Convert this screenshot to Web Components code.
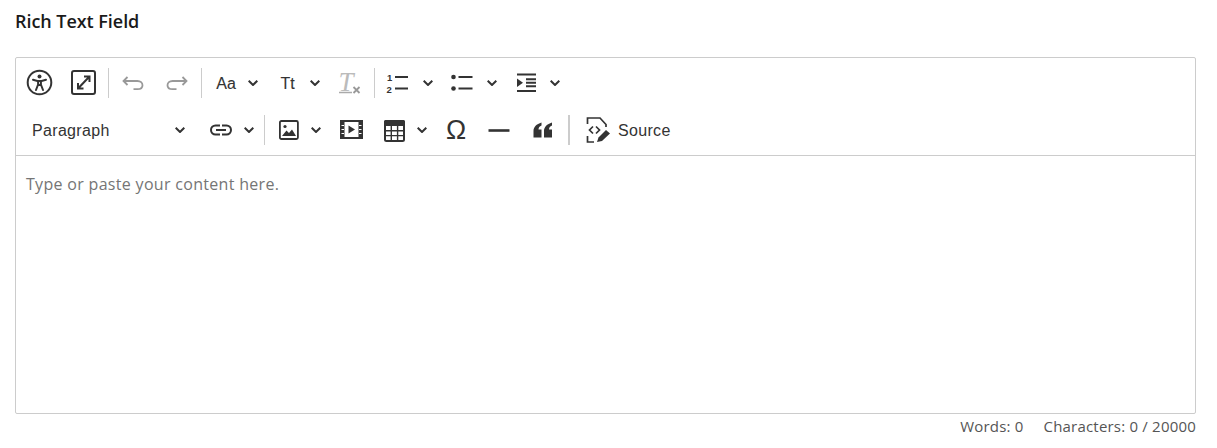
<!DOCTYPE html>
<html lang="en">
<head>
<meta charset="utf-8">
<title>Rich Text Field</title>
<style>
    html, body { margin: 0; background: #fff; }
    body { padding: 0 21px 0 15px; }
    .tb-text { margin-top: 2px; letter-spacing: .33px; }
    .omega { font-size: 27px; line-height: 30px; margin-left: 2px; }
</style>
</head>
<body>
<rt-field label="Rich Text Field" placeholder="Type or paste your content here." words="0" chars="0 / 20000">
    <tb-row>
        <tb-btn><rt-icon name="a11y"></rt-icon></tb-btn>
        <tb-btn><rt-icon name="fullscreen"></rt-icon></tb-btn>
        <tb-sep style="--before:3px"></tb-sep>
        <tb-btn><rt-icon name="undo"></rt-icon></tb-btn>
        <tb-btn><rt-icon name="redo"></rt-icon></tb-btn>
        <tb-sep></tb-sep>
        <tb-drop><rt-icon name="size"></rt-icon></tb-drop>
        <tb-drop><rt-icon name="family"></rt-icon></tb-drop>
        <tb-btn><rt-icon name="clear"></rt-icon></tb-btn>
        <tb-sep></tb-sep>
        <tb-drop style="--left:8px;--gap:12px;--right:6px"><rt-icon name="numbered"></rt-icon></tb-drop>
        <tb-drop style="--gap:13px"><rt-icon name="bullets"></rt-icon></tb-drop>
        <tb-drop style="--gap:10px"><rt-icon name="indent"></rt-icon></tb-drop>
    </tb-row>
    <tb-row>
        <tb-drop style="--left:15px;--right:13px;--gap:0px;width:181px"><span class="tb-text">Paragraph</span></tb-drop>
        <tb-drop style="--left:10px;--gap:10px"><rt-icon name="link"></rt-icon></tb-drop>
        <tb-sep></tb-sep>
        <tb-drop><rt-icon name="image"></rt-icon></tb-drop>
        <tb-btn><rt-icon name="media"></rt-icon></tb-btn>
        <tb-drop style="--left:8px;--gap:10px;--right:6px"><rt-icon name="table"></rt-icon></tb-drop>
        <tb-btn><span class="omega">Ω</span></tb-btn>
        <tb-btn><rt-icon name="rule"></rt-icon></tb-btn>
        <tb-btn><rt-icon name="quote"></rt-icon></tb-btn>
        <tb-sep style="--before:3px;--sep-width:2px;--after:1px"></tb-sep>
        <tb-btn style="--pad:14px;--gap:7px">
            <rt-icon name="source"></rt-icon><span class="tb-text">Source</span>
        </tb-btn>
    </tb-row>
</rt-field>

<script>
// All icons are on a 26x26 grid so the coordinates read as pixels
const ICONS = {
    a11y: `<circle cx="13.5" cy="12.5" r="11.8" fill="none" stroke="#333" stroke-width="2"/>
        <circle cx="13.5" cy="6.6" r="2" fill="#333"/>
        <path d="M7 9.8 L11.5 11 H15.5 L20 9.8 M12.1 11 V14.5 L10 20 M14.9 11 V14.5 L17 20 M12.1 15 H14.9" fill="none" stroke="#333" stroke-width="2" stroke-linecap="round" stroke-linejoin="round"/>`,
    fullscreen: `<rect x="2" y="1" width="23" height="23" rx="2" fill="none" stroke="#333" stroke-width="2"/>
        <path d="M9 17.5 L18.5 7.5 M14 6.5 H19.5 V12 M8 13 V18.5 H13.5" fill="none" stroke="#333" stroke-width="2"/>`,
    undo: `<path d="M7.5 7 L3.5 11 L7.5 15 M3.5 11 H17.5 C20.5 11 22.5 13 22.5 15.2 C22.5 17.5 20.5 19.2 17.5 19.2 H13.5" fill="none" stroke="#999" stroke-width="1.8"/>`,
    redo: `<path d="M18.5 7 L22.5 11 L18.5 15 M22.5 11 H8.5 C5.5 11 3.5 13 3.5 15.2 C3.5 17.5 5.5 19.2 8.5 19.2 H12.5" fill="none" stroke="#999" stroke-width="1.8"/>`,
    size: `<text x="13" y="18.5" text-anchor="middle" font-family="Liberation Sans" font-size="16" fill="#333" stroke="#333" stroke-width=".12">Aa</text>`,
    family: `<text x="12.5" y="18.5" text-anchor="middle" font-family="Liberation Sans" font-size="16" fill="#333" stroke="#333" stroke-width=".12">Tt</text>`,
    clear: `<text x="1.5" y="21" font-family="Liberation Serif" font-style="italic" font-size="27" fill="#bbb">T</text>
        <path d="M2 22.5 H15" stroke="#aaa" stroke-width="1.5"/>
        <path d="M16.5 17 L22.5 23 M22.5 17 L16.5 23" stroke="#999" stroke-width="1.8"/>`,
    numbered: `<text x="2" y="10.5" font-family="Liberation Sans" font-weight="700" font-size="9.5" fill="#333">1</text>
        <text x="1.5" y="22.5" font-family="Liberation Sans" font-weight="700" font-size="9.5" fill="#333">2</text>
        <path d="M10 7 H23 M10 18.5 H23" stroke="#333" stroke-width="2"/>`,
    bullets: `<circle cx="5.5" cy="7" r="2.3" fill="#333"/><circle cx="5.5" cy="18.5" r="2.3" fill="#333"/>
        <path d="M10.5 7 H24.5 M10.5 18.5 H24.5" stroke="#333" stroke-width="2"/>`,
    indent: `<path d="M3 4.5 H22 M3 21 H22" stroke="#333" stroke-width="2"/>
        <path d="M12 9.3 H22 M12 12.8 H22 M12 16.3 H22" stroke="#333" stroke-width="2"/>
        <path d="M3 8.5 L9 12.8 L3 17 Z" fill="#333"/>`,
    link: `<path d="M12 8.5 H7.5 A4.5 4.5 0 0 0 7.5 17.5 H12 M14 8.5 H18.5 A4.5 4.5 0 0 1 18.5 17.5 H14 M8 13 H18" fill="none" stroke="#333" stroke-width="2"/>`,
    image: `<rect x="3.9" y="4" width="18" height="18" rx="1.5" fill="none" stroke="#333" stroke-width="1.8"/>
        <circle cx="9" cy="9.5" r="1.6" fill="#333"/>
        <path d="M6 19 L10.5 13.5 L13 16 L16 12.5 L20 19 Z" fill="#333"/>`,
    media: `<rect x="3" y="4" width="21" height="17" fill="none" stroke="#333" stroke-width="2"/>
        <rect x="3" y="4" width="3.5" height="17" fill="#333"/><rect x="20.5" y="4" width="3.5" height="17" fill="#333"/>
        <path d="M3.5 8.5 H6 M3.5 12.5 H6 M3.5 16.5 H6 M21 8.5 H23.5 M21 12.5 H23.5 M21 16.5 H23.5" stroke="#fff" stroke-width="1"/>
        <path d="M10.5 8.5 L17 12.5 L10.5 16.5 Z" fill="#333"/>`,
    table: `<rect x="4" y="4" width="19" height="20" rx="1.5" fill="none" stroke="#333" stroke-width="2"/>
        <rect x="3" y="3" width="21" height="6" rx="1.5" fill="#333"/>
        <path d="M10.3 9 V23 M16.6 9 V23 M4 13.7 H23 M4 18.6 H23" stroke="#333" stroke-width="1.4"/>`,
    rule: `<path d="M2.5 13.5 H23.5" stroke="#333" stroke-width="2.6"/>`,
    quote: `<path d="M3.5 20.5 V14 C3.5 10 6.5 7 11.5 5.5 V8.5 C9.5 9.2 8.5 10.5 8.5 12.5 H11.5 V20.5 Z M14 20.5 V14 C14 10 17 7 22 5.5 V8.5 C20 9.2 19 10.5 19 12.5 H22 V20.5 Z" fill="#333"/>`,
    source: `<path d="M2.5 7 V1 H15 L21 7.5 V10 M2.5 19 V25 H9" fill="none" stroke="#333" stroke-width="1.7"/>
        <path d="M8 9.5 L4.5 13 L8 16.5 M11 9.5 L14.5 13 L11 16.5" fill="none" stroke="#333" stroke-width="1.7"/>
        <path d="M12 25 L13.5 20.5 L21 13 L25 16.5 L17 24 Z" fill="#333"/>`
};

class RtIcon extends HTMLElement {
    connectedCallback() {
        const name = this.getAttribute('name');
        this.attachShadow({ mode: 'open' });
        this.shadowRoot.innerHTML = `
            <style>
                :host { display: block; width: 26px; height: 26px; flex: none; }
                svg { display: block; overflow: visible; }
            </style>
            <svg width="26" height="26" viewBox="0 0 26 26" aria-hidden="true">${ICONS[name] || ''}</svg>
        `;
    }
}

class TbButton extends HTMLElement {
    constructor() {
        super();
        this.attachShadow({ mode: 'open' });
        this.shadowRoot.innerHTML = `
            <style>
                :host {
                    display: flex;
                    align-items: center;
                    justify-content: center;
                    flex: none;
                    min-width: 44px;
                    height: 44px;
                    box-sizing: border-box;
                    padding: 0 0 0 var(--pad, 0);
                    gap: var(--gap, 0);
                    font: 16px "Liberation Sans", Arial, sans-serif;
                    color: #333;
                }
            </style>
            <slot></slot>
        `;
    }
}

class TbDropdown extends HTMLElement {
    constructor() {
        super();
        this.attachShadow({ mode: 'open' });
        this.shadowRoot.innerHTML = `
            <style>
                :host {
                    display: flex;
                    align-items: center;
                    flex: none;
                    height: 44px;
                    box-sizing: border-box;
                    padding: 0 var(--right, 8px) 0 var(--left, 9px);
                    font: 16px "Liberation Sans", Arial, sans-serif;
                    color: #333;
                }
                .arrow { display: block; margin-left: var(--gap, 9px); flex: none; }
                .label { flex: 1; display: flex; align-items: center; }
            </style>
            <div class="label"><slot></slot></div>
            <svg class="arrow" width="10" height="6" viewBox="0 0 10 6" aria-hidden="true">
                <path d="M.7 .7 L5 5 L9.3 .7" fill="none" stroke="#333" stroke-width="2"/>
            </svg>
        `;
    }
}

class TbSeparator extends HTMLElement {
    constructor() {
        super();
        this.attachShadow({ mode: 'open' });
        this.shadowRoot.innerHTML = `
            <style>
                :host {
                    display: block;
                    flex: none;
                    width: var(--sep-width, 1px);
                    height: 30px;
                    margin: 0 var(--after, 2px) 0 var(--before, 2px);
                    background: #ccc;
                }
            </style>
        `;
    }
}

class TbRow extends HTMLElement {
    constructor() {
        super();
        this.attachShadow({ mode: 'open' });
        this.shadowRoot.innerHTML = `
            <style>
                :host { display: flex; align-items: center; padding-left: 1px; }
            </style>
            <slot></slot>
        `;
    }
}

class RtField extends HTMLElement {
    constructor() {
        super();
        this.attachShadow({ mode: 'open' });
    }

    connectedCallback() {
        const attr = (name) => this.getAttribute(name) || '';
        this.shadowRoot.innerHTML = `
            <style>
                :host {
                    display: block;
                    font-family: "Open Sans", Arial, sans-serif;
                }
                .label {
                    padding-top: 10px;
                    margin-bottom: 25px;
                    font-size: 18px;
                    font-weight: 600;
                    line-height: 22px;
                    letter-spacing: -.05px;
                    color: #1a1a1a;
                }
                .box {
                    height: 357px;
                    box-sizing: border-box;
                    display: flex;
                    flex-direction: column;
                    border: 1px solid #ccc;
                    border-radius: 2px;
                }
                .toolbar {
                    display: flex;
                    flex-direction: column;
                    gap: 3px;
                    padding: 3px 0;
                    border-bottom: 1px solid #ccc;
                }
                .editor {
                    flex: 1;
                    padding: 17px 10px;
                    font-size: 16px;
                    letter-spacing: .31px;
                    line-height: 22px;
                    color: #757575;
                }
                .footer {
                    display: flex;
                    justify-content: flex-end;
                    gap: 20px;
                    margin-top: 3px;
                    font-size: 15px;
                    letter-spacing: .2px;
                    line-height: 19px;
                    color: #555;
                }
            </style>
            <div class="label">${attr('label')}</div>
            <div class="box">
                <div class="toolbar"><slot></slot></div>
                <div class="editor">${attr('placeholder')}</div>
            </div>
            <div class="footer">
                <span>Words: ${attr('words')}</span>
                <span>Characters: ${attr('chars')}</span>
            </div>
        `;
    }
}

customElements.define('rt-icon', RtIcon);
customElements.define('tb-btn', TbButton);
customElements.define('tb-drop', TbDropdown);
customElements.define('tb-sep', TbSeparator);
customElements.define('tb-row', TbRow);
customElements.define('rt-field', RtField);
</script>
</body>
</html>
